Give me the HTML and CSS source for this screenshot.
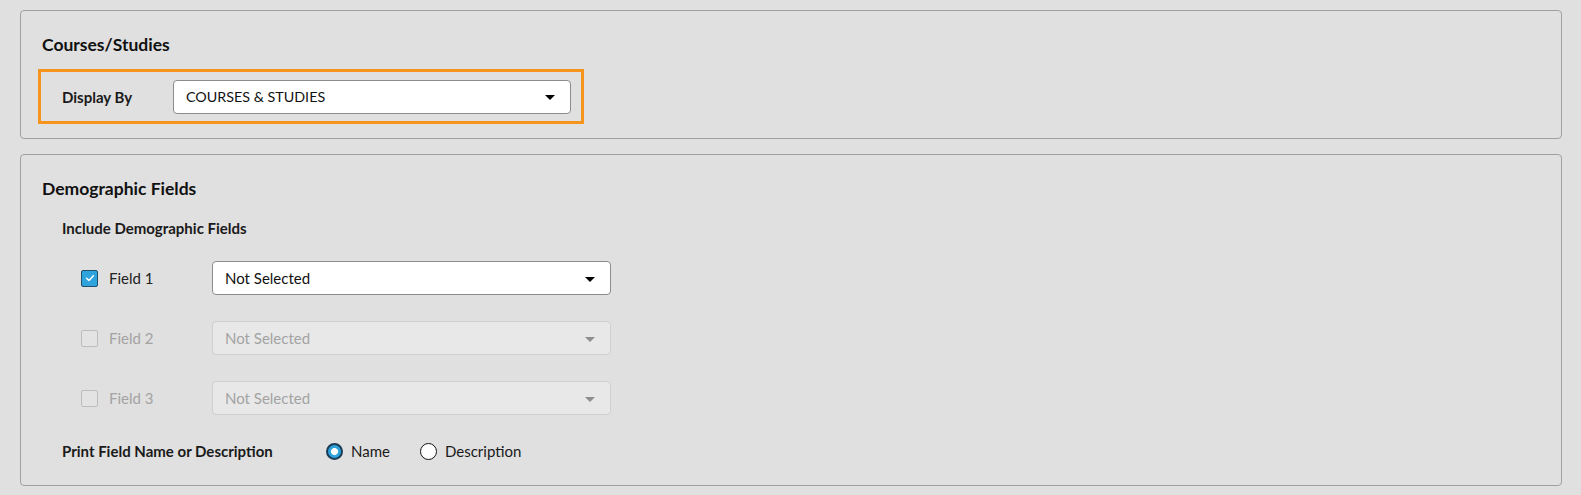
FILE: index.html
```html
<!DOCTYPE html>
<html>
<head>
<meta charset="utf-8">
<link rel="stylesheet" href="styles.css">
</head>
<body>
<div class="page">
  <section class="panel panel-courses">
    <h2 class="panel-title">Courses/Studies</h2>
    <div class="focus-row">
      <label class="row-label">Display By</label>
      <div class="select select-wide">
        <span class="select-text upper">COURSES &amp; STUDIES</span>
        <span class="caret"></span>
      </div>
    </div>
  </section>

  <section class="panel panel-demo">
    <h2 class="panel-title">Demographic Fields</h2>
    <div class="sub-title">Include Demographic Fields</div>
    <div class="field-list">
      <div class="field-row">
        <span class="check checked">
          <svg viewBox="0 0 16 16" width="14" height="14"><path d="M4 8.2 L6.8 10.9 L11.9 5.4" fill="none" stroke="#fff" stroke-width="1.7" stroke-linecap="round" stroke-linejoin="round"/></svg>
        </span>
        <span class="field-name">Field 1</span>
        <div class="select">
          <span class="select-text">Not Selected</span>
          <span class="caret"></span>
        </div>
      </div>
      <div class="field-row disabled">
        <span class="check"></span>
        <span class="field-name">Field 2</span>
        <div class="select">
          <span class="select-text">Not Selected</span>
          <span class="caret"></span>
        </div>
      </div>
      <div class="field-row disabled">
        <span class="check"></span>
        <span class="field-name">Field 3</span>
        <div class="select">
          <span class="select-text">Not Selected</span>
          <span class="caret"></span>
        </div>
      </div>
    </div>
    <div class="print-row">
      <span class="print-label">Print Field Name or Description</span>
      <div class="radio-group">
        <span class="radio-option"><span class="radio on"></span><span class="radio-text">Name</span></span>
        <span class="radio-option"><span class="radio"></span><span class="radio-text">Description</span></span>
      </div>
    </div>
  </section>
</div>
</body>
</html>
```

FILE: styles.css
```css
* { box-sizing: border-box; }
html, body { margin: 0; padding: 0; }
body {
  background: #e0e0e0;
  font-family: "Lato", "Open Sans", sans-serif;
  color: #1a1a1a;
}
.page {
  padding: 10px 19px 0 20px;
  display: flex;
  flex-direction: column;
  gap: 15px;
}
.panel {
  border: 1px solid #a0a0a0;
  border-radius: 4px;
  background: #e0e0e0;
  padding: 22px 20px 0 21px;
}
.panel-courses { height: 129px; }
.panel-demo { height: 332px; }
.panel-title {
  margin: 0;
  font-size: 17.5px;
  font-weight: 700;
  line-height: 24px;
  color: #111;
}
.focus-row {
  margin-top: 12px;
  margin-left: -4px;
  width: 546px;
  height: 55px;
  border: 3px solid #f7941d;
  display: flex;
  align-items: center;
  padding-left: 21px;
}
.row-label {
  width: 111px;
  font-size: 15px;
  font-weight: 700;
  color: #1a1a1a;
}
.select {
  width: 399px;
  height: 34px;
  background: #fff;
  border: 1px solid #8c8c8c;
  border-radius: 4px;
  display: flex;
  align-items: center;
  justify-content: space-between;
  padding: 0 15px 0 12px;
  font-size: 15px;
  color: #111;
}
.select-wide { width: 398px; }
.select-text { line-height: 20px; }
.upper { font-size: 14.3px; }
.caret {
  width: 0; height: 0;
  border-left: 5px solid transparent;
  border-right: 5px solid transparent;
  border-top: 5px solid #000;
  margin-top: 2px;
}
.sub-title {
  margin-top: 17px;
  margin-left: 20px;
  font-size: 15px;
  font-weight: 700;
  line-height: 20px;
}
.field-list {
  margin-top: 23px;
  margin-left: 39px;
  display: flex;
  flex-direction: column;
  gap: 26px;
}
.field-row {
  display: flex;
  align-items: center;
  height: 34px;
}
.check {
  width: 17px;
  height: 17px;
  border: 1px solid #a9a9a9;
  border-radius: 2px;
  background: #e6e6e6;
  display: inline-flex;
  align-items: center;
  justify-content: center;
}
.check.checked {
  background: #2ea3dc;
  border-color: #1f4f6a;
}
.field-name {
  margin-left: 11px;
  width: 103px;
  font-size: 15px;
  color: #222;
}
.disabled .field-name { color: #a3a3a3; }
.disabled .check { border-color: #bdbdbd; background: #e3e3e3; }
.disabled .select {
  background: #e8e8e8;
  border-color: #cfcfcf;
  color: #a3a3a3;
}
.disabled .caret { border-top-color: #8e8e8e; }
.print-row {
  margin-top: 22px;
  margin-left: 20px;
  display: flex;
  align-items: center;
  height: 28px;
}
.print-label {
  width: 264px;
  font-size: 15px;
  font-weight: 700;
}
.radio-group { display: flex; align-items: center; gap: 30px; }
.radio-option { display: flex; align-items: center; gap: 8px; }
.radio {
  width: 17px;
  height: 17px;
  border-radius: 50%;
  border: 1.5px solid #111;
  background: #fff;
  display: inline-block;
}
.radio.on {
  border: 2px solid #1b3b55;
  background: radial-gradient(circle, #fff 0 3.2px, #2ea3dc 3.8px);
}
.radio-text { font-size: 15px; color: #1a1a1a; }
```
